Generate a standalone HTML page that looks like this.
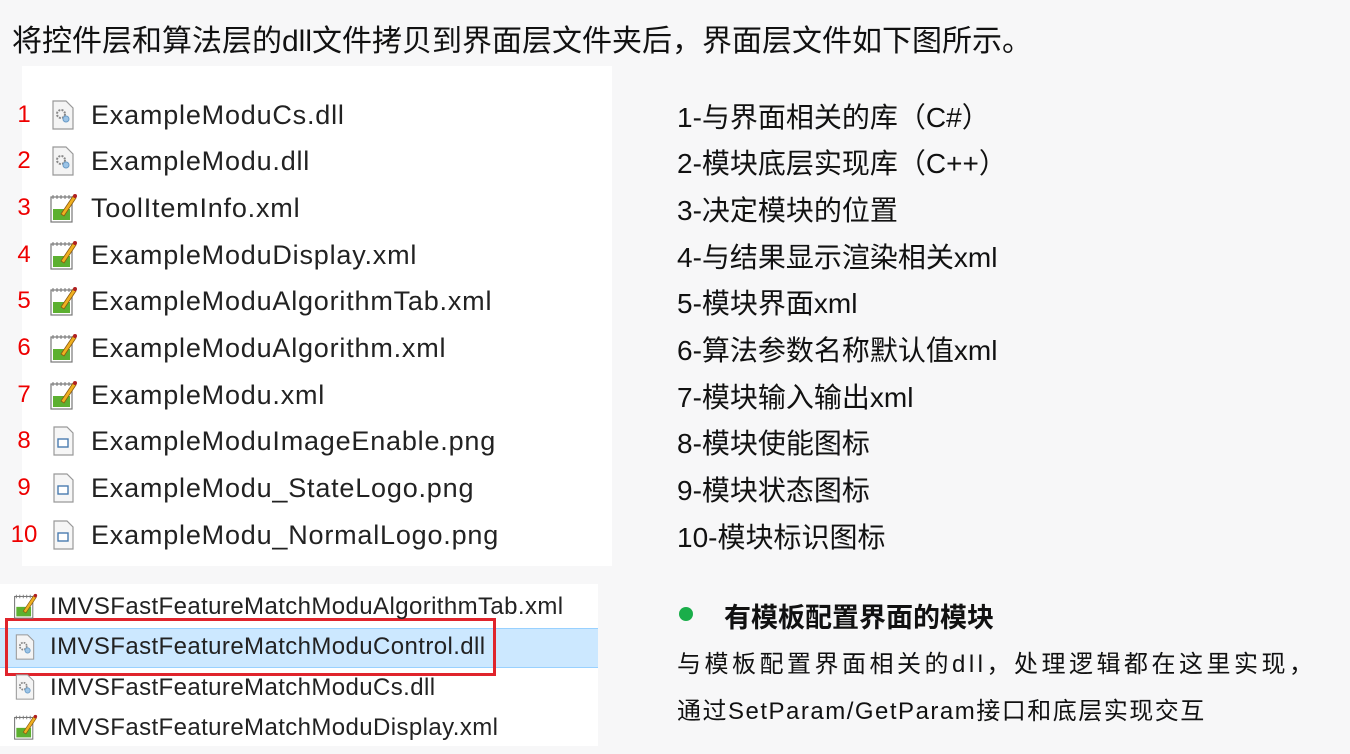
<!DOCTYPE html>
<html><head><meta charset="utf-8"><style>
*{margin:0;padding:0;box-sizing:border-box}
body{width:1350px;height:754px;overflow:hidden;background:#f7f7f8;position:relative;font-family:"Liberation Sans","Noto Sans CJK SC",sans-serif;color:#111}
.a{position:absolute;white-space:nowrap}
.title{left:12px;top:16px;font-size:30px;color:#111}
.p1{left:22px;top:66px;width:590px;height:500px;background:#fff}
.p2{left:0;top:584px;width:598px;height:162px;background:#fff}
.num{color:#e00;font-size:24px;width:40px;text-align:center;left:4px}
.fn{font-size:27px;letter-spacing:.8px;color:#222;left:91px;margin-top:2px}
.ic{left:48px;width:30px;height:32px}
.rt{left:677px;font-size:28px;color:#111}
.fn2{font-size:24px;letter-spacing:.4px;color:#222;left:50px;margin-top:1px}
.ic2{left:12px;width:26px;height:28px}
</style></head><body>
<div class="a title">将控件层和算法层的dll文件拷贝到界面层文件夹后，界面层文件如下图所示。</div>
<div class="a p1"></div>
<div class="a p2"></div>
<div class="a" style="left:0;top:628px;width:598px;height:40px;background:#cce8ff;border-top:1px solid #99d1ff;border-bottom:1px solid #99d1ff"></div>
<div class="a" style="left:5px;top:618px;width:491px;height:58px;border:3px solid #e0242c"></div>

<svg width="0" height="0" style="position:absolute"><defs>
<g id="dll"><path d="M5 2h13l7 7v21H5z" fill="#f4f4f4" stroke="#999" stroke-width="1.2"/><circle cx="13" cy="15" r="4" fill="none" stroke="#888" stroke-width="2" stroke-dasharray="2 1.2"/><circle cx="18" cy="20" r="3" fill="#9cc4e6" stroke="#6a9cc8"/></g>
<g id="xml"><rect x="3" y="5" width="21" height="25" fill="#fff" stroke="#777" stroke-width="1.2"/><path d="M5 3v4M9 3v4M13 3v4M17 3v4M21 3v4" stroke="#777"/><rect x="5" y="17" width="17" height="11" fill="#5cb030"/><path d="M13 22l12-18 3 2-12 18z" fill="#f0b020" stroke="#8a5a10" stroke-width=".8"/><circle cx="27" cy="4" r="2" fill="#b02020"/></g>
<g id="png"><path d="M6 2h13l6 6v22H6z" fill="#f6f6f6" stroke="#999" stroke-width="1.2"/><rect x="10" y="14" width="10" height="8" fill="#fff" stroke="#4a7cb0" stroke-width="1.4"/></g>
</defs></svg>

<div class="a num" style="top:101px">1</div><svg class="a ic" style="top:99px" viewBox="0 0 30 32"><use href="#dll"/></svg><div class="a fn" style="top:98px">ExampleModuCs.dll</div>
<div class="a num" style="top:147px">2</div><svg class="a ic" style="top:145px" viewBox="0 0 30 32"><use href="#dll"/></svg><div class="a fn" style="top:144px">ExampleModu.dll</div>
<div class="a num" style="top:194px">3</div><svg class="a ic" style="top:192px" viewBox="0 0 30 32"><use href="#xml"/></svg><div class="a fn" style="top:191px">ToolItemInfo.xml</div>
<div class="a num" style="top:241px">4</div><svg class="a ic" style="top:239px" viewBox="0 0 30 32"><use href="#xml"/></svg><div class="a fn" style="top:238px">ExampleModuDisplay.xml</div>
<div class="a num" style="top:287px">5</div><svg class="a ic" style="top:285px" viewBox="0 0 30 32"><use href="#xml"/></svg><div class="a fn" style="top:284px">ExampleModuAlgorithmTab.xml</div>
<div class="a num" style="top:334px">6</div><svg class="a ic" style="top:332px" viewBox="0 0 30 32"><use href="#xml"/></svg><div class="a fn" style="top:331px">ExampleModuAlgorithm.xml</div>
<div class="a num" style="top:381px">7</div><svg class="a ic" style="top:379px" viewBox="0 0 30 32"><use href="#xml"/></svg><div class="a fn" style="top:378px">ExampleModu.xml</div>
<div class="a num" style="top:427px">8</div><svg class="a ic" style="top:425px" viewBox="0 0 30 32"><use href="#png"/></svg><div class="a fn" style="top:424px">ExampleModuImageEnable.png</div>
<div class="a num" style="top:474px">9</div><svg class="a ic" style="top:472px" viewBox="0 0 30 32"><use href="#png"/></svg><div class="a fn" style="top:471px">ExampleModu_StateLogo.png</div>
<div class="a num" style="top:521px">10</div><svg class="a ic" style="top:519px" viewBox="0 0 30 32"><use href="#png"/></svg><div class="a fn" style="top:518px">ExampleModu_NormalLogo.png</div>

<div class="a rt" style="top:96px">1-与界面相关的库（C#）</div>
<div class="a rt" style="top:142px">2-模块底层实现库（C++）</div>
<div class="a rt" style="top:189px">3-决定模块的位置</div>
<div class="a rt" style="top:236px">4-与结果显示渲染相关xml</div>
<div class="a rt" style="top:282px">5-模块界面xml</div>
<div class="a rt" style="top:329px">6-算法参数名称默认值xml</div>
<div class="a rt" style="top:376px">7-模块输入输出xml</div>
<div class="a rt" style="top:422px">8-模块使能图标</div>
<div class="a rt" style="top:469px">9-模块状态图标</div>
<div class="a rt" style="top:516px">10-模块标识图标</div>

<svg class="a ic2" style="top:592px" viewBox="0 0 30 32"><use href="#xml"/></svg><div class="a fn2" style="top:592px">IMVSFastFeatureMatchModuAlgorithmTab.xml</div>
<svg class="a ic2" style="top:633px" viewBox="0 0 30 32"><use href="#dll"/></svg><div class="a fn2" style="top:632px">IMVSFastFeatureMatchModuControl.dll</div>
<svg class="a ic2" style="top:673px" viewBox="0 0 30 32"><use href="#dll"/></svg><div class="a fn2" style="top:673px">IMVSFastFeatureMatchModuCs.dll</div>
<svg class="a ic2" style="top:713px" viewBox="0 0 30 32"><use href="#xml"/></svg><div class="a fn2" style="top:713px">IMVSFastFeatureMatchModuDisplay.xml</div>

<div class="a" style="left:679px;top:607px;width:14px;height:14px;border-radius:50%;background:#1aae4a"></div>
<div class="a" style="left:724px;top:596px;font-size:27px;font-weight:bold">有模板配置界面的模块</div>
<div class="a" style="left:677px;top:644px;font-size:24px;letter-spacing:3.5px">与模板配置界面相关的dll，处理逻辑都在这里实现，</div>
<div class="a" style="left:677px;top:691px;font-size:24px;letter-spacing:1.5px">通过SetParam/GetParam接口和底层实现交互</div>
</body></html>
